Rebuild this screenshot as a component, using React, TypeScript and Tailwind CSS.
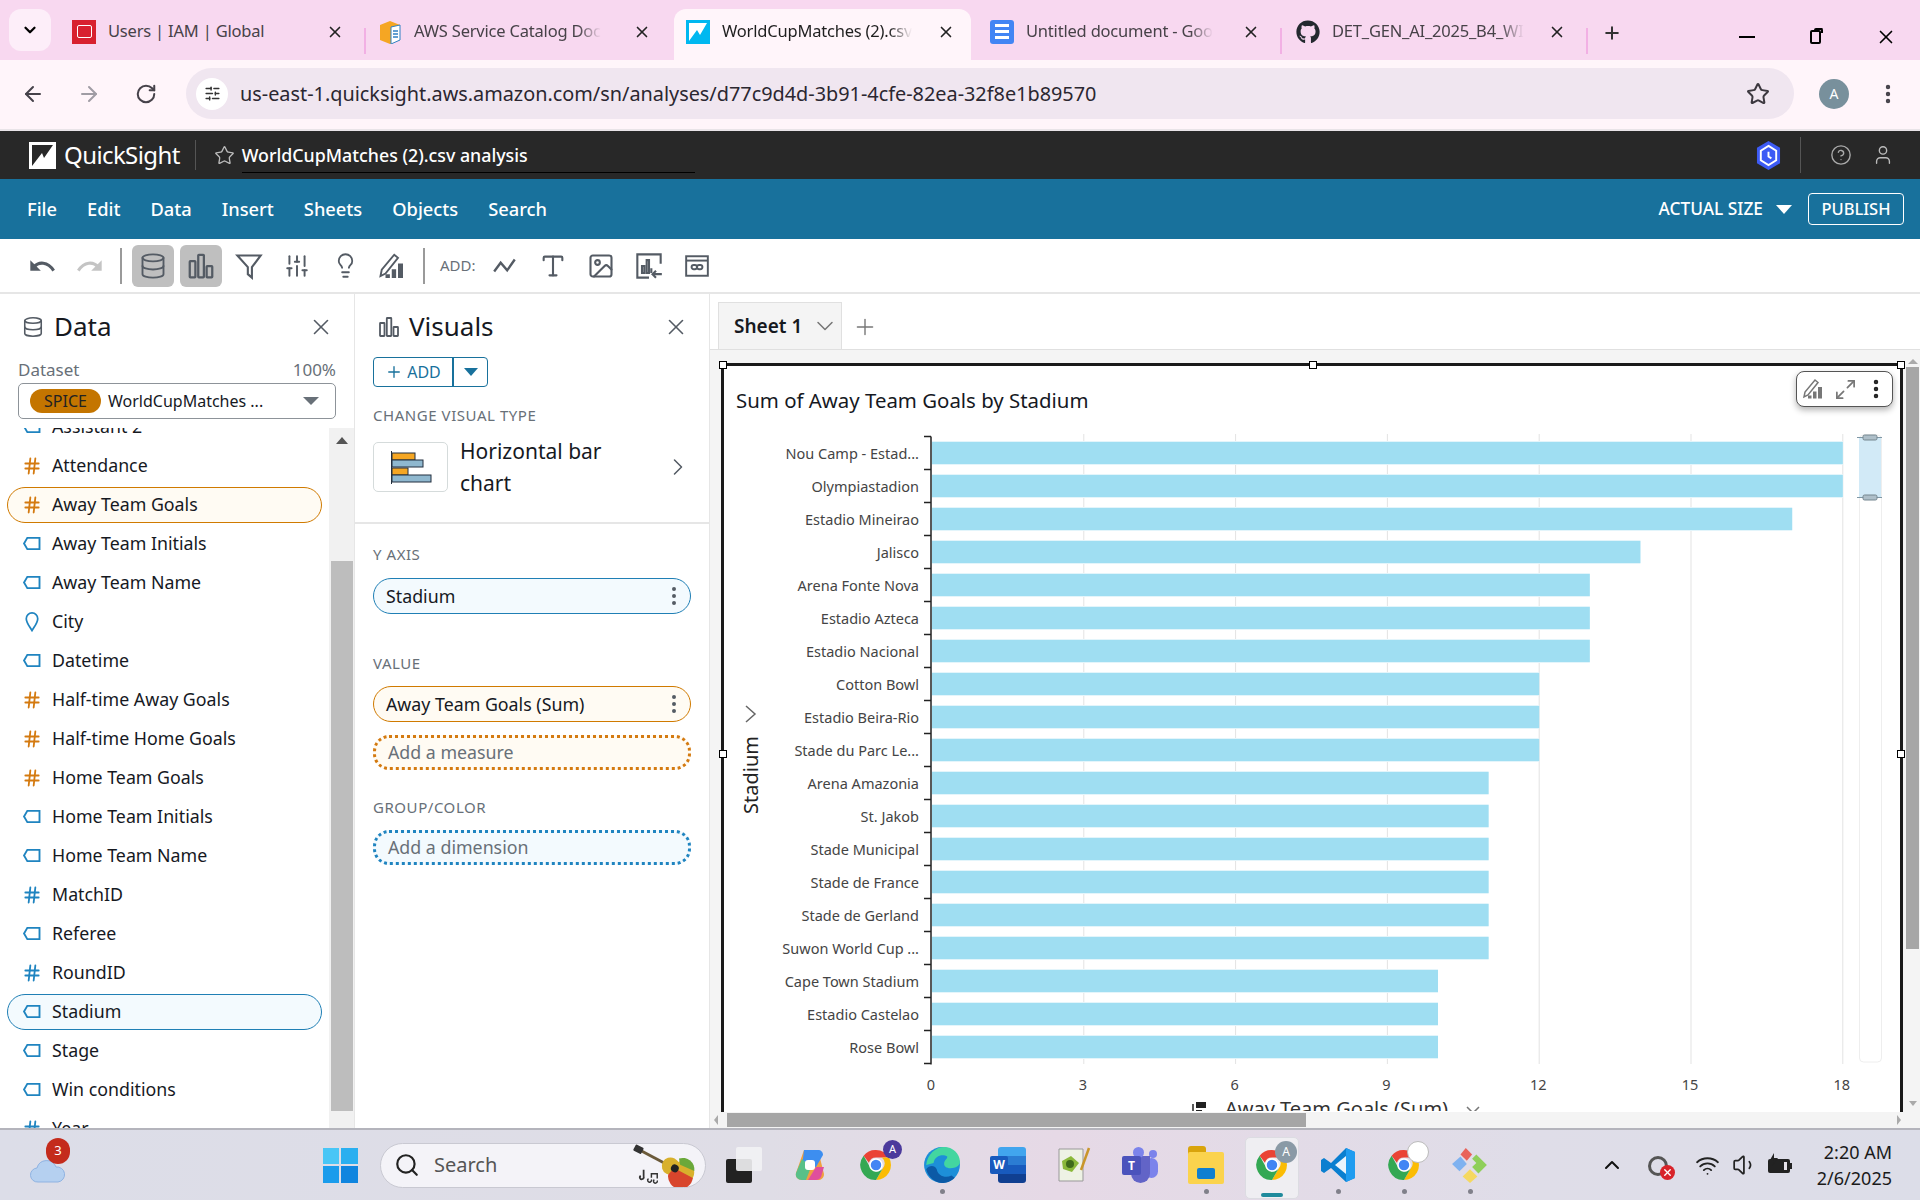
import {
  ArrowLeft,
  ArrowRight,
  ChevronDown,
  ChevronRight,
  ChevronUp,
  CircleHelp,
  Database,
  Hash,
  Image,
  Lightbulb,
  Maximize2,
  MoreVertical,
  Plus,
  RotateCw,
  Search,
  SlidersVertical,
  Star,
  Type,
  User,
  Volume1,
  Wifi,
  X,
} from "lucide-react";
import { FaGithub } from "react-icons/fa";

const font = "font-['Noto_Sans',sans-serif]";

const fields: { name: string; kind: "tag" | "dim" | "measure" | "geo" | "idnum"; active?: boolean }[] = [
  { name: "Attendance", kind: "measure" },
  { name: "Away Team Goals", kind: "measure", active: true },
  { name: "Away Team Initials", kind: "tag" },
  { name: "Away Team Name", kind: "tag" },
  { name: "City", kind: "geo" },
  { name: "Datetime", kind: "tag" },
  { name: "Half-time Away Goals", kind: "measure" },
  { name: "Half-time Home Goals", kind: "measure" },
  { name: "Home Team Goals", kind: "measure" },
  { name: "Home Team Initials", kind: "tag" },
  { name: "Home Team Name", kind: "tag" },
  { name: "MatchID", kind: "idnum" },
  { name: "Referee", kind: "tag" },
  { name: "RoundID", kind: "idnum" },
  { name: "Stadium", kind: "tag", active: true },
  { name: "Stage", kind: "tag" },
  { name: "Win conditions", kind: "tag" },
  { name: "Year", kind: "idnum" },
];

const stadiums: [string, number][] = [
  ["Nou Camp - Estad...", 18],
  ["Olympiastadion", 18],
  ["Estadio Mineirao", 17],
  ["Jalisco", 14],
  ["Arena Fonte Nova", 13],
  ["Estadio Azteca", 13],
  ["Estadio Nacional", 13],
  ["Cotton Bowl", 12],
  ["Estadio Beira-Rio", 12],
  ["Stade du Parc Le...", 12],
  ["Arena Amazonia", 11],
  ["St. Jakob", 11],
  ["Stade Municipal", 11],
  ["Stade de France", 11],
  ["Stade de Gerland", 11],
  ["Suwon World Cup ...", 11],
  ["Cape Town Stadium", 10],
  ["Estadio Castelao", 10],
  ["Rose Bowl", 10],
];

function TagIcon({ className }: { className?: string }) {
  return (
    <svg viewBox="0 0 20 16" className={className} fill="none" stroke="currentColor" strokeWidth="2">
      <path d="M5 2h13v12H5L1.5 8z" />
    </svg>
  );
}

function BarsIcon({ className }: { className?: string }) {
  return (
    <svg viewBox="0 0 24 24" className={className} fill="none" stroke="currentColor" strokeWidth="1.8">
      <rect x="3" y="8" width="4.5" height="13" rx="0.5" />
      <rect x="9.8" y="3" width="4.5" height="18" rx="0.5" />
      <rect x="16.5" y="12" width="4.5" height="9" rx="0.5" />
    </svg>
  );
}

function PencilBarsIcon({ className }: { className?: string }) {
  return (
    <svg viewBox="0 0 24 24" className={className} fill="none" stroke="currentColor" strokeWidth="1.5">
      <path d="M2 20l1-5L13 3l3 2.500L6 18z" />
      <path d="M6 21.500v-3h3.500v3zM11 21.500v-7h3.500v7zM16 21.500V10h4v11.500z" fill="currentColor" stroke="none" />
    </svg>
  );
}

function UndoIcon({ className, flip }: { className?: string; flip?: boolean }) {
  return (
    <svg viewBox="0 0 24 24" className={`${className} ${flip ? "-scale-x-100" : ""}`} fill="none" stroke="currentColor" strokeWidth="2.600">
      <path d="M5 13c4-5 12-5 17 3" />
      <path d="M2 7v9h9z" fill="currentColor" stroke="none" />
    </svg>
  );
}

function Tab({
  title,
  icon,
  active,
  width,
  fade = true,
}: {
  title: string;
  icon: React.ReactNode;
  active?: boolean;
  width: string;
  fade?: boolean;
}) {
  return (
    <div className={`${width} flex h-[51px] shrink-0 items-center pb-[6px] pl-[12px] ${active ? "rounded-t-[12px] bg-[#fff5fa] pr-[16px] text-[#1f1f1f]" : "pr-[20px] text-[#474248]"}`}>
      <div className="flex h-6 w-6 shrink-0 items-center justify-center">{icon}</div>
      <span className="ml-3 min-w-0 flex-1 whitespace-nowrap text-[16.500px] tracking-[-0.2px]">
        <span className={`inline-block ${fade ? "[mask-image:linear-gradient(to_right,black_88%,transparent)]" : ""}`}>{title}</span>
      </span>
      <X className="ml-2 h-[18px] w-[18px] shrink-0 text-[#222]" strokeWidth={2.2} />
    </div>
  );
}

function TabSep() {
  return <div className="mb-[6px] h-[26px] w-[2px] shrink-0 bg-[#f2b0e4]" />;
}

function ToolIcon({ children, selected }: { children: React.ReactNode; selected?: boolean }) {
  return (
    <div className={`flex h-[42px] w-[42px] items-center justify-center rounded-[6px] text-[#545b64] ${selected ? "bg-[#bfbfbf]" : ""}`}>
      {children}
    </div>
  );
}

function FieldIcon({ kind }: { kind: string }) {
  if (kind === "tag") return <TagIcon className="h-[15px] w-[20px] text-[#1f84c0]" />;
  if (kind === "geo") {
    return (
      <svg viewBox="0 0 20 22" className="h-[21px] w-[20px] text-[#1f84c0]" fill="none" stroke="currentColor" strokeWidth="1.8">
        <path d="M10 20.5C7 15.5 4 12 4 8a6 6 0 0 1 12 0c0 4-3 7.500-6 12.500z" />
      </svg>
    );
  }
  return <Hash className={`h-[22px] w-[20px] ${kind === "measure" ? "text-[#d47a10]" : "text-[#1f84c0]"}`} strokeWidth={2.2} />;
}

function FieldRow({ name, kind, active }: { name: string; kind: string; active?: boolean }) {
  const pill = active
    ? kind === "measure"
      ? "border-[#d07a00] bg-[#fffbf3]"
      : "border-[#1f7fb5] bg-[#f3fafe]"
    : "border-transparent";
  return (
    <div className="flex h-[39px] items-center pl-[7px]">
      <div className={`flex h-[36px] w-[315px] items-center gap-[10px] rounded-full border pl-[14px] text-[17.800px] text-[#16191f] ${pill}`}>
        <div className="flex w-[20px] justify-center">
          <FieldIcon kind={kind} />
        </div>
        <span>{name}</span>
      </div>
    </div>
  );
}

function SectionLabel({ children }: { children: React.ReactNode }) {
  return <div className="text-[15px] leading-5 tracking-[0.55px] text-[#687078]">{children}</div>;
}

function WellPill({ children, tone }: { children: React.ReactNode; tone: "blue" | "orange" }) {
  return (
    <div className={`flex h-[36px] w-[318px] items-center justify-between rounded-full border pl-[12px] pr-[4px] text-[17.800px] text-[#16191f] ${tone === "blue" ? "border-[#1f7fb5] bg-[#f3fafe]" : "border-[#d07a00] bg-[#fffbf3]"}`}>
      <span>{children}</span>
      <MoreVertical className="h-6 w-6 text-[#545b64]" />
    </div>
  );
}

function DropWell({ children, tone }: { children: React.ReactNode; tone: "blue" | "orange" }) {
  return (
    <div className={`flex h-[35px] w-[318px] items-center rounded-[16px] border-[3px] border-dotted pl-[12px] text-[17.800px] text-[#687078] ${tone === "blue" ? "border-[#1f84c0] bg-[#f3fafe]" : "border-[#d47a10] bg-[#fffbf3]"}`}>
      {children}
    </div>
  );
}

function Handle({ className }: { className: string }) {
  return <div className={`absolute h-[8px] w-[8px] border border-black bg-white ${className}`} />;
}

function Chart() {
  const x0 = 932;
  const unit = 50.6;
  return (
    <svg width="1175" height="692" className="block" fontFamily="Noto Sans, sans-serif">
      <g transform="translate(-724,-420)">
        {[3, 6, 9, 12, 15, 18].map((t) => (
          <line key={t} x1={x0 + t * unit} x2={x0 + t * unit} y1="435" y2="1065" stroke="#e3e3e3" />
        ))}
        {stadiums.map(([name, value], i) => {
          const y = 454 + i * 33;
          return (
            <g key={name}>
              <rect x={x0} y={y - 12} width={value * unit} height="24" fill="#e3f5fb" />
              <rect x={x0} y={y - 11} width={value * unit} height="22" fill="#9fdef2" />
              <text x="919" y={y + 6} textAnchor="end" fontSize="14.500" fill="#444">
                {name}
              </text>
            </g>
          );
        })}
        <path
          d={`M931 437.500V1065.500 ${stadiums.map((_, i) => `M924 ${437.5 + i * 33}H931`).join(" ")} M924 1064.500H931`}
          stroke="#222"
          strokeWidth="1.5"
          fill="none"
        />
        {[0, 3, 6, 9, 12, 15, 18].map((t) => (
          <text key={t} x={x0 + t * unit - 1} y="1091" textAnchor="middle" fontSize="14.500" fill="#444">
            {t}
          </text>
        ))}
        <path d="M1193 1105V1118" stroke="#222" strokeWidth="1.5" />
        <rect x="1196" y="1103" width="10" height="6" fill="#222" />
        <rect x="1196" y="1111" width="6" height="6" fill="#222" />
        <text x="1225" y="1117" fontSize="20" fill="#333">
          Away Team Goals (Sum)
        </text>
        <path d="M1467 1108l6 6 6-6" stroke="#777" strokeWidth="1.5" fill="none" />
        <text transform="translate(758,776) rotate(-90)" textAnchor="middle" fontSize="20" fill="#222">
          Stadium
        </text>
        <path d="M746 707l9 8-9 8" stroke="#666" strokeWidth="1.5" fill="none" />
        <rect x="1859.500" y="436" width="22" height="627" rx="4" fill="#fff" stroke="#eee" />
        <rect x="1859" y="438" width="22" height="60" fill="#d2eaf7" />
        <path d="M1857 438.500H1882M1857 498.500H1882" stroke="#7f97a5" />
        <rect x="1863" y="436" width="14" height="5" rx="1.500" fill="#aebfc9" stroke="#75868f" />
        <rect x="1863" y="496" width="14" height="5" rx="1.500" fill="#aebfc9" stroke="#75868f" />
      </g>
    </svg>
  );
}

function ChromeIcon() {
  return (
    <svg viewBox="0 0 48 48" className="h-[36px] w-[36px]">
      <path d="M24 4a20 20 0 0 1 17.300 10H24a10 10 0 0 0-9.500 7L7.500 11.500A20 20 0 0 1 24 4z" fill="#ea4335" />
      <path d="M41.300 14A20 20 0 0 1 24 44l8.700-15a10 10 0 0 0-1-15z" fill="#fbbc04" />
      <path d="M24 44A20 20 0 0 1 7.500 11.500L16 27a10 10 0 0 0 16.700 2z" fill="#34a853" />
      <circle cx="24" cy="24" r="8" fill="#4285f4" stroke="#fff" strokeWidth="2" />
    </svg>
  );
}

function TaskSlot({ children, dot }: { children: React.ReactNode; dot?: boolean }) {
  return (
    <div className="relative flex h-[72px] w-[66px] shrink-0 items-center justify-center">
      {children}
      {dot && <div className="absolute bottom-[7px] h-[5px] w-[5px] rounded-full bg-[#80808a]" />}
    </div>
  );
}

function Badge({ children, tone }: { children?: React.ReactNode; tone: string }) {
  return (
    <div className={`absolute right-[8px] top-[12px] flex h-[22px] w-[22px] items-center justify-center rounded-full text-[12px] text-white ${tone}`}>
      {children}
    </div>
  );
}

export default function App() {
  return (
    <div className={`flex h-[1200px] w-[1920px] flex-col overflow-hidden bg-white ${font}`}>
      {/* browser tabs */}
      <div className="flex h-[60px] shrink-0 items-end bg-[#f8d8f0]">
        <div className="mb-[9px] ml-[9px] mr-[9px] flex h-[42px] w-[42px] shrink-0 items-center justify-center rounded-[12px] bg-[#fdeef9]">
          <ChevronDown className="h-[18px] w-[18px] text-black" strokeWidth={3} />
        </div>
        <Tab
          width="w-[304px]"
          fade={false}
          title="Users | IAM | Global"
          icon={
            <div className="flex h-6 w-6 items-center justify-center bg-[#d8212f]">
              <div className="h-[13px] w-[15px] rounded-[2px] border border-white" />
            </div>
          }
        />
        <TabSep />
        <Tab
          width="w-[305px]"
          title="AWS Service Catalog Doc"
          icon={
            <svg viewBox="0 0 24 24" className="h-6 w-6">
              <path d="M2 5l10-4 10 4v15l-10 4-10-4z" fill="#f5a623" />
              <path d="M13 7l9-2v15l-9 4z" fill="#fff" stroke="#2f80c4" />
              <path d="M15 11h5M15 14h5M15 17h5" stroke="#2f80c4" strokeWidth="1.500" />
            </svg>
          }
        />
        <div className="w-[3px] shrink-0" />
        <Tab
          active
          width="w-[297px]"
          title="WorldCupMatches (2).csv"
          icon={
            <svg viewBox="0 0 24 24" className="h-6 w-6">
              <rect width="24" height="24" fill="#00b8f0" />
              <path d="M3 21V3h18L14 15l-3-5z" fill="#fff" />
            </svg>
          }
        />
        <div className="w-[7px] shrink-0" />
        <Tab
          width="w-[302px]"
          title="Untitled document - Goo"
          icon={
            <div className="flex h-6 w-6 flex-col items-center justify-center gap-[3px] rounded-[3px] bg-[#4285f4]">
              <div className="h-[3px] w-[14px] bg-white" />
              <div className="h-[3px] w-[14px] bg-white" />
              <div className="h-[3px] w-[14px] bg-white" />
            </div>
          }
        />
        <TabSep />
        <div className="w-[2px] shrink-0" />
        <Tab
          width="w-[302px]"
          title="DET_GEN_AI_2025_B4_WI"
          icon={<FaGithub className="h-6 w-6 text-[#24292f]" />}
        />
        <TabSep />
        <div className="mb-[6px] ml-[14px] flex h-[42px] items-center">
          <Plus className="h-[20px] w-[20px] text-[#333]" strokeWidth={2.4} />
        </div>
        <div className="mb-[12px] ml-auto flex items-center pr-[23px]">
          <div className="h-[2px] w-[16px] bg-black" />
          <div className="relative ml-[55px] h-[14px] w-[11px] rounded-[2px] border-2 border-black">
            <div className="absolute -right-[4px] -top-[4px] h-[5px] w-[9px] rounded-t-[2px] border-r-2 border-t-2 border-black" />
          </div>
          <X className="ml-[54px] h-[22px] w-[22px] text-black" strokeWidth={1.8} />
        </div>
      </div>

      {/* address bar */}
      <div className="flex h-[71px] shrink-0 items-center border-b-2 border-[#e9e4e8] bg-[#fff5fa] pb-[2px]">
        <ArrowLeft className="ml-[21px] h-6 w-6 text-[#46424a]" />
        <ArrowRight className="ml-[32px] h-6 w-6 text-[#a09ca4]" />
        <RotateCw className="ml-[34px] h-[22px] w-[22px] text-[#46424a]" strokeWidth={2.2} />
        <div className="ml-[29px] flex h-[51px] w-[1608px] items-center rounded-full bg-[#f0e6f0]">
          <div className="ml-[10px] flex h-[32px] w-[32px] items-center justify-center rounded-full bg-white">
            <SlidersVertical className="h-[17px] w-[17px] rotate-90 text-[#333]" />
          </div>
          <span className="ml-[12px] whitespace-nowrap text-[19.850px] text-[#2b2730]">
            us-east-1.quicksight.aws.amazon.com/sn/analyses/d77c9d4d-3b91-4cfe-82ea-32f8e1b89570
          </span>
          <Star className="ml-auto mr-[24px] h-[24px] w-[24px] text-[#3c383f]" strokeWidth={2} />
        </div>
        <div className="ml-[25px] flex h-[30px] w-[30px] items-center justify-center rounded-full bg-[#78909c] text-[14px] text-white">A</div>
        <MoreVertical className="ml-[27px] h-6 w-6 text-[#46424a]" strokeWidth={2.4} />
      </div>

      {/* quicksight header */}
      <div className="flex h-[48px] shrink-0 items-center bg-[#282828] text-white">
        <svg viewBox="0 0 27 27" className="ml-[29px] h-[27px] w-[27px]">
          <rect width="27" height="27" fill="#fff" />
          <path d="M3 3h21L15 16l-2-5-10 13z" fill="#282828" />
        </svg>
        <span className="ml-[8px] text-[24px] tracking-[-0.6px]">QuickSight</span>
        <div className="ml-[15px] h-[30px] w-px bg-[#555]" />
        <Star className="ml-[18px] h-[21px] w-[21px] text-[#bbb]" strokeWidth={1.5} />
        <div className="ml-[7px] h-[36px] w-[453px] border-b border-black text-[17.800px] font-medium leading-[36px]">WorldCupMatches (2).csv analysis</div>
        <svg viewBox="0 0 26 30" className="ml-auto h-[29px] w-[25px]">
          <path d="M13 0l12 7v16l-12 7-12-7V7z" fill="#3d5bf5" />
          <path d="M13 5l8 5v10l-8 5-8-5V10z" fill="none" stroke="#fff" strokeWidth="2" />
          <path d="M13 11v5l3 2" fill="none" stroke="#fff" strokeWidth="2" />
        </svg>
        <div className="ml-[19px] h-[36px] w-px bg-[#555]" />
        <CircleHelp className="ml-[29px] h-[22px] w-[22px] text-[#aaa]" strokeWidth={1.5} />
        <User className="ml-[20px] mr-[26px] h-[22px] w-[22px] text-[#bbb]" strokeWidth={1.5} />
      </div>

      {/* menu */}
      <div className="flex h-[60px] shrink-0 items-center bg-[#18719c] text-[18.300px] font-medium text-white">
        <div className="ml-[27px] flex gap-[30px]">
          {["File", "Edit", "Data", "Insert", "Sheets", "Objects", "Search"].map((m) => (
            <span key={m}>{m}</span>
          ))}
        </div>
        <span className="ml-auto text-[17.300px]">ACTUAL SIZE</span>
        <div className="ml-[13px] h-0 w-0 border-x-[8px] border-t-[9px] border-x-transparent border-t-white" />
        <div className="ml-[16px] mr-[16px] flex h-[32px] w-[96px] items-center justify-center rounded-[4px] border border-white text-[16.500px]">PUBLISH</div>
      </div>

      {/* toolbar */}
      <div className="flex h-[55px] shrink-0 items-center border-b-2 border-[#e6e6e6] pl-[21px]">
        <ToolIcon>
          <UndoIcon className="h-[28px] w-[28px]" />
        </ToolIcon>
        <div className="ml-[6px]">
          <ToolIcon>
            <UndoIcon flip className="h-[28px] w-[28px] text-[#c4c4c4]" />
          </ToolIcon>
        </div>
        <div className="ml-[9px] mr-[10px] h-[36px] w-[2px] bg-[#9a9a9a]" />
        <ToolIcon selected>
          <Database className="h-[28px] w-[28px]" strokeWidth={1.6} />
        </ToolIcon>
        <div className="ml-[6px]">
          <ToolIcon selected>
            <BarsIcon className="h-[30px] w-[30px]" />
          </ToolIcon>
        </div>
        <div className="ml-[6px] flex gap-[6px]">
          <ToolIcon>
            <svg viewBox="0 0 24 24" className="h-[28px] w-[28px]" fill="none" stroke="currentColor" strokeWidth="1.8">
              <path d="M2 3h20l-7.500 10v9L11 19v-6z" />
            </svg>
          </ToolIcon>
          <ToolIcon>
            <SlidersVertical className="h-[26px] w-[26px]" strokeWidth={1.8} />
          </ToolIcon>
          <ToolIcon>
            <Lightbulb className="h-[27px] w-[27px]" strokeWidth={1.6} />
          </ToolIcon>
          <ToolIcon>
            <PencilBarsIcon className="h-[30px] w-[30px]" />
          </ToolIcon>
        </div>
        <div className="ml-[9px] mr-[15px] h-[36px] w-[2px] bg-[#9a9a9a]" />
        <span className="text-[15px] text-[#687078]">ADD:</span>
        <div className="ml-[8px] flex gap-[6px] text-[#545b64]">
          <ToolIcon>
            <svg viewBox="0 0 24 24" className="h-[26px] w-[26px]" fill="none" stroke="currentColor" strokeWidth="2.2">
              <path d="M2 17l6-8 6 7 7-10" />
            </svg>
          </ToolIcon>
          <ToolIcon>
            <Type className="h-[28px] w-[28px]" strokeWidth={1.8} />
          </ToolIcon>
          <ToolIcon>
            <Image className="h-[28px] w-[28px]" strokeWidth={1.8} />
          </ToolIcon>
          <ToolIcon>
            <svg viewBox="0 0 24 24" className="h-[28px] w-[28px]" fill="none" stroke="currentColor" strokeWidth="1.8">
              <path d="M22 10V2H2v20h10" />
              <path d="M6 18v-6h2v6zM10 18V7h2v11zM14 18v-4" />
              <path d="M23 19h-8m3-3l-3 3 3 3" />
            </svg>
          </ToolIcon>
          <ToolIcon>
            <svg viewBox="0 0 24 24" className="h-[26px] w-[26px]" fill="none" stroke="currentColor" strokeWidth="1.8">
              <rect x="2" y="3" width="20" height="18" />
              <path d="M2 7h20" />
              <rect x="7" y="11" width="5" height="4" rx="2" />
              <rect x="12" y="11" width="5" height="4" rx="2" />
            </svg>
          </ToolIcon>
        </div>
      </div>

      {/* main area */}
      <div className="flex min-h-0 flex-1">
        {/* data panel */}
        <div className="flex w-[355px] shrink-0 flex-col border-r border-[#e6e6e6]">
          <div className="flex h-[64px] shrink-0 items-center pl-[22px] pr-[20px] pt-[1px]">
            <Database className="h-[22px] w-[22px] text-[#545b64]" strokeWidth={1.7} />
            <span className="ml-[10px] text-[26px] text-[#16191f]">Data</span>
            <X className="ml-auto h-[26px] w-[26px] text-[#545b64]" strokeWidth={1.5} />
          </div>
          <div className="flex h-[23px] shrink-0 items-center justify-between pl-[18px] pr-[18px] text-[17px] text-[#687078]">
            <span>Dataset</span>
            <span>100%</span>
          </div>
          <div className="ml-[18px] mt-[2px] flex h-[36px] w-[318px] shrink-0 items-center rounded-[5px] border border-[#8d9399] pl-[11px] pr-[16px]">
            <span className="flex h-[24px] w-[71px] items-center justify-center rounded-full bg-[#c47500] text-[16px] text-[#222]">SPICE</span>
            <span className="ml-[7px] text-[16px] text-[#16191f]">WorldCupMatches ...</span>
            <div className="ml-auto h-0 w-0 border-x-[8px] border-t-[8px] border-x-transparent border-t-[#687078]" />
          </div>
          <div className="mt-[9px] flex min-h-0 flex-1">
            <div className="min-w-0 flex-1 overflow-hidden">
              <div className="-mt-[21px] flex h-[39px] items-center pl-[7px]">
                <div className="flex items-center gap-[10px] pl-[15px] text-[17.800px] text-[#16191f]">
                  <div className="flex w-[20px] justify-center">
                    <FieldIcon kind="tag" />
                  </div>
                  <span>Assistant 2</span>
                </div>
              </div>
              {fields.map((f) => (
                <FieldRow key={f.name} name={f.name} kind={f.kind} active={f.active} />
              ))}
            </div>
            <div className="flex w-[25px] shrink-0 flex-col items-center bg-[#f1f1f1]">
              <div className="mt-[9px] h-0 w-0 border-x-[6px] border-b-[7px] border-x-transparent border-b-[#555]" />
              <div className="mt-[117px] h-[550px] w-[22px] bg-[#bdbdbd]" />
            </div>
          </div>
        </div>

        {/* visuals panel */}
        <div className="flex w-[355px] shrink-0 flex-col border-r border-[#e6e6e6]">
          <div className="flex h-[61px] shrink-0 items-center pl-[22px] pr-[20px] pt-[4px]">
            <BarsIcon className="h-[24px] w-[24px] text-[#545b64]" />
            <span className="ml-[8px] text-[26px] text-[#16191f]">Visuals</span>
            <X className="ml-auto h-[26px] w-[26px] text-[#545b64]" strokeWidth={1.5} />
          </div>
          <div className="ml-[18px] mt-[2px] flex h-[30px] w-[115px] shrink-0 items-center rounded-[4px] border border-[#18719c] text-[#18719c]">
            <div className="flex w-[80px] items-center justify-center gap-[4px] border-r-2 border-[#18719c] text-[16px] leading-[28px]">
              <Plus className="h-[18px] w-[18px]" strokeWidth={1.8} />
              ADD
            </div>
            <div className="mx-auto h-0 w-0 border-x-[7px] border-t-[8px] border-x-transparent border-t-[#18719c]" />
          </div>
          <div className="ml-[18px] mt-[18px] shrink-0">
            <SectionLabel>CHANGE VISUAL TYPE</SectionLabel>
          </div>
          <div className="ml-[18px] mt-[17px] flex h-[50px] shrink-0 items-center pr-[17px]">
            <div className="flex h-[50px] w-[75px] items-center justify-center rounded-[5px] border border-[#d5dbdb]">
              <svg viewBox="0 0 42 34" className="h-[36px] w-[42px]">
                <rect x="2" y="3" width="23" height="7" fill="#f5a623" stroke="#232f3e" />
                <rect x="2" y="10" width="31" height="7" fill="#8fb8cf" stroke="#232f3e" />
                <rect x="2" y="18" width="16" height="7" fill="#f5a623" stroke="#232f3e" />
                <rect x="2" y="25" width="39" height="7" fill="#8fb8cf" stroke="#232f3e" />
                <path d="M1.500 1v33" stroke="#232f3e" />
              </svg>
            </div>
            <div className="ml-[12px] w-[170px] text-[21px] leading-[32px] text-[#16191f]">Horizontal bar chart</div>
            <ChevronRight className="ml-auto h-[28px] w-[28px] text-[#545b64]" strokeWidth={1.3} />
          </div>
          <div className="mt-[30px] h-[2px] shrink-0 bg-[#e6e6e6]" />
          <div className="flex flex-col pl-[18px] pt-[20px]">
            <SectionLabel>Y AXIS</SectionLabel>
            <div className="mt-[14px]">
              <WellPill tone="blue">Stadium</WellPill>
            </div>
            <div className="mt-[39px]">
              <SectionLabel>VALUE</SectionLabel>
            </div>
            <div className="mt-[13px]">
              <WellPill tone="orange">Away Team Goals (Sum)</WellPill>
            </div>
            <div className="mt-[13px]">
              <DropWell tone="orange">Add a measure</DropWell>
            </div>
            <div className="mt-[27px]">
              <SectionLabel>GROUP/COLOR</SectionLabel>
            </div>
            <div className="mt-[13px]">
              <DropWell tone="blue">Add a dimension</DropWell>
            </div>
          </div>
        </div>

        {/* sheet */}
        <div className="flex min-w-0 flex-1 flex-col">
          <div className="flex h-[56px] shrink-0 items-end border-b border-[#e0e0e0] pl-[8px]">
            <div className="flex h-[47px] w-[124px] items-center border border-b-0 border-[#e0e0e0] bg-[#f4f4f4] pl-[15px]">
              <span className="text-[19px] font-semibold text-[#16191f]">Sheet 1</span>
              <ChevronDown className="ml-[9px] h-[28px] w-[28px] text-[#777]" strokeWidth={1.3} />
            </div>
            <div className="mb-[9px] ml-[10px]">
              <Plus className="h-[26px] w-[26px] text-[#777]" strokeWidth={1.3} />
            </div>
          </div>
          <div className="flex min-h-0 flex-1 bg-[#f4f4f4]">
            <div className="min-w-0 flex-1 overflow-hidden pl-[11px] pt-[13px]">
              <div className="relative h-[900px] w-[1182px] border-[3px] border-b-0 border-[#1a1a1a] bg-white">
                <Handle className="-left-[5px] -top-[5px]" />
                <Handle className="left-[585px] -top-[5px]" />
                <Handle className="-right-[5px] -top-[5px]" />
                <Handle className="-left-[5px] top-[384px]" />
                <Handle className="-right-[5px] top-[384px]" />
                <div className="flex h-[53px] items-end pb-[3px] pl-[12px] text-[20.400px] text-[#16191f]">Sum of Away Team Goals by Stadium</div>
                <Chart />
                <div className="absolute right-[7px] top-[5px] flex h-[36px] w-[97px] items-center justify-between rounded-[8px] border border-[#555] bg-white pl-[5px] pr-[4px] text-[#777] shadow-[0_3px_6px_rgba(0,0,0,0.3)]">
                  <PencilBarsIcon className="h-[24px] w-[24px]" />
                  <Maximize2 className="h-[23px] w-[23px]" strokeWidth={1.8} />
                  <MoreVertical className="h-[24px] w-[24px] text-[#222]" strokeWidth={2.5} />
                </div>
              </div>
            </div>
            <div className="flex w-[15px] shrink-0 flex-col items-center">
              <div className="mt-[9px] h-0 w-0 border-x-[5px] border-b-[5px] border-x-transparent border-b-[#aaa]" />
              <div className="mt-[3px] h-[582px] w-[13px] bg-[#a6a6a6]" />
              <div className="mb-[6px] mt-auto h-0 w-0 border-x-[4px] border-t-[5px] border-x-transparent border-t-[#aaa]" />
            </div>
          </div>
          <div className="flex h-[16px] shrink-0 items-center bg-[#f4f4f4] pl-[4px]">
            <div className="h-0 w-0 border-y-[5px] border-r-[4px] border-y-transparent border-r-[#aaa]" />
            <div className="ml-[9px] h-[14px] w-[579px] bg-[#a6a6a6]" />
            <div className="ml-auto mr-[19px] h-0 w-0 border-y-[5px] border-l-[4px] border-y-transparent border-l-[#aaa]" />
          </div>
        </div>
      </div>

      {/* windows taskbar */}
      <div className="flex h-[72px] shrink-0 items-center border-t-2 border-[#b4b4bc] bg-[linear-gradient(90deg,#dcdde8_0%,#dfdde6_40%,#e6d9e6_55%,#dfdde8_80%,#dcdde8_100%)]">
        <div className="relative flex h-[70px] w-[307px] shrink-0 items-center pl-[30px]">
          <svg viewBox="0 0 36 24" className="mt-[12px] h-[24px] w-[36px]">
            <path d="M8 23a7 7 0 0 1-1-14 10 10 0 0 1 19-1 7.500 7.500 0 0 1 2 15z" fill="#b5d0f0" stroke="#8fb3e2" />
          </svg>
          <div className="absolute left-[46px] top-[8px] flex h-[26px] w-[24px] items-center justify-center rounded-full bg-[#c42b1c] text-[13px] text-white">3</div>
        </div>
        <TaskSlot>
          <div className="grid h-[35px] w-[35px] grid-cols-2 gap-[2px]">
            <div className="bg-[#48c6f6]" />
            <div className="bg-[#2aaff0]" />
            <div className="bg-[#1a9cec]" />
            <div className="bg-[#0f85df]" />
          </div>
        </TaskSlot>
        <div className="ml-[7px] flex h-[45px] w-[326px] shrink-0 items-center rounded-full border border-[#c9c9d2] bg-[#f4f3f8] pl-[13px]">
          <Search className="h-[26px] w-[26px] text-[#222]" strokeWidth={2} />
          <span className="ml-[14px] text-[20px] text-[#555]">Search</span>
          <svg viewBox="0 0 70 44" className="ml-auto mr-[6px] h-[44px] w-[68px]">
            <path d="M8 6l30 16" stroke="#6b5a3a" strokeWidth="3" />
            <rect x="3" y="2" width="9" height="7" rx="1" fill="#333" transform="rotate(28 7 6)" />
            <g transform="rotate(28 46 26)">
              <ellipse cx="40" cy="26" rx="9" ry="9" fill="#d8b02c" />
              <ellipse cx="54" cy="26" rx="12" ry="12" fill="#d8b02c" />
              <path d="M42 35a12 12 0 0 0 24-9H44z" fill="#d8452c" />
              <path d="M44 15a12 12 0 0 1 20 4l-16 1z" fill="#6aa83a" />
              <circle cx="45" cy="26" r="4" fill="#222" />
            </g>
            <path d="M13 27v7M13 34a2 2 0 1 1-3-1" stroke="#333" strokeWidth="1.800" fill="none" />
            <path d="M21 35v-4h6v5M21 37a2 2 0 1 1-3-1M27 38a2 2 0 1 1-3-1" stroke="#333" strokeWidth="1.500" fill="none" />
          </svg>
        </div>
        <div className="ml-[5px] flex shrink-0">
          <TaskSlot>
            <div className="relative h-[36px] w-[36px]">
              <div className="absolute bottom-0 left-0 h-[24px] w-[26px] rounded-[2px] bg-[#222]" />
              <div className="absolute right-0 top-0 h-[24px] w-[26px] rounded-[2px] bg-[#f2f2f4]/90" />
            </div>
          </TaskSlot>
          <TaskSlot>
            <svg viewBox="0 0 36 36" className="h-[36px] w-[36px]">
              <path d="M12 3h14l6 24c0 4-3 6-6 6H10C6 33 3 30 4 26z" fill="#f0a040" />
              <path d="M12 3h14c3 0 5 2 5 5l-7 12H10z" fill="#3d8ef0" />
              <path d="M4 26l6-14 9 8-5 13h-4c-4 0-7-3-6-7z" fill="#58c088" />
              <path d="M24 20h8l-3 10c-1 2-3 3-5 3h-8z" fill="#e04f9c" />
              <rect x="13" y="13" width="10" height="10" rx="3" fill="#fff" />
            </svg>
          </TaskSlot>
          <TaskSlot>
            <ChromeIcon />
            <div className="absolute right-[7px] top-[11px] flex h-[19px] w-[19px] items-center justify-center rounded-full bg-[#4b3a9c] text-[11px] text-white">A</div>
          </TaskSlot>
          <TaskSlot dot>
            <svg viewBox="0 0 36 36" className="h-[38px] w-[38px]">
              <circle cx="18" cy="18" r="17" fill="#1d8fd8" />
              <path d="M3 18C4 8 12 1 20 1c8 0 15 6 15 14 0 4-4 6-9 6-4 0-6-2-6-4 0-4 3-4 3-7-4-3-12-1-13 6z" fill="#43d6a0" />
              <path d="M13 22c1 6 8 9 14 6l3 2c-4 4-8 5-12 5-6 0-13-5-15-13 3-4 8-4 10 0z" fill="#0c5aa6" />
            </svg>
          </TaskSlot>
          <TaskSlot>
            <div className="relative h-[36px] w-[36px]">
              <div className="absolute right-0 top-0 flex h-[36px] w-[28px] flex-col overflow-hidden rounded-[3px]">
                <div className="flex-1 bg-[#41a5ee]" />
                <div className="flex-1 bg-[#2b7cd3]" />
                <div className="flex-1 bg-[#185abd]" />
                <div className="flex-1 bg-[#103f91]" />
              </div>
              <div className="absolute left-0 top-[9px] flex h-[18px] w-[18px] items-center justify-center rounded-[2px] bg-[#185abd] text-[12px] font-bold text-white">W</div>
            </div>
          </TaskSlot>
          <TaskSlot>
            <svg viewBox="0 0 36 38" className="h-[38px] w-[36px]">
              <path d="M3 3h24v32H3z" fill="#eef2e4" stroke="#999" />
              <path d="M6 15l9-5 8 7-7 9-9-3z" fill="#8ab83a" />
              <circle cx="14" cy="18" r="4" fill="#3f6b1a" />
              <path d="M25 24L33 2" stroke="#c9962a" strokeWidth="2.500" />
            </svg>
          </TaskSlot>
          <TaskSlot>
            <div className="relative h-[36px] w-[36px]">
              <div className="absolute right-0 top-[11px] h-[20px] w-[13px] rounded-full bg-[#7b83eb]" />
              <div className="absolute right-[1px] top-[3px] h-[8px] w-[8px] rounded-full bg-[#7b83eb]" />
              <div className="absolute left-[9px] top-[9px] h-[27px] w-[19px] rounded-b-full bg-[#6264c7]" />
              <div className="absolute left-[11px] top-0 h-[11px] w-[11px] rounded-full bg-[#7b83eb]" />
              <div className="absolute left-0 top-[9px] flex h-[19px] w-[19px] items-center justify-center rounded-[2px] bg-[#4b53bc] text-[12px] font-bold text-white">T</div>
            </div>
          </TaskSlot>
          <TaskSlot dot>
            <div className="relative h-[38px] w-[36px]">
              <div className="absolute left-0 top-0 h-[10px] w-[18px] rounded-t-[3px] bg-[#d9a40c]" />
              <div className="absolute bottom-0 left-0 h-[32px] w-[36px] rounded-[2px] bg-[#fbd34d]" />
              <div className="absolute bottom-[5px] left-[9px] h-[11px] w-[18px] rounded-[2px] bg-[#0f7fd0]" />
            </div>
          </TaskSlot>
          <TaskSlot>
            <div className="absolute bottom-[2px] top-[8px] left-[6px] right-[6px] rounded-[5px] border border-[#dcdce2] bg-[#efeef2]" />
            <div className="relative">
              <ChromeIcon />
            </div>
            <Badge tone="bg-[#8a9aa6]">A</Badge>
            <div className="absolute bottom-[4px] h-[4px] w-[22px] rounded-full bg-[#1f8a9c]" />
          </TaskSlot>
          <TaskSlot dot>
            <svg viewBox="0 0 36 36" className="h-[36px] w-[36px]">
              <path d="M26 1l9 4v26l-9 4-15-14-7 5-3-2V13l3-2 7 5z" fill="#0a7fd0" />
              <path d="M26 1l9 4v26l-9 4z" fill="#1f9cf0" />
              <path d="M26 9L15 18l11 9z" fill="#eaf4fc" />
            </svg>
          </TaskSlot>
          <TaskSlot dot>
            <ChromeIcon />
            <Badge tone="bg-white border border-[#bbb]" />
          </TaskSlot>
          <TaskSlot dot>
            <svg viewBox="0 0 36 36" className="h-[38px] w-[38px]">
              <path d="M14 2l6 6-5 6-6-6z" fill="#e8635a" />
              <path d="M9 10l6 7-7 7-7-7z" fill="#7fb2f0" />
              <path d="M24 8l10 10-8 8-6-6 4-4-4-4z" fill="#8fcf5a" />
              <path d="M18 22l7 7-7 6-7-6z" fill="#f5d860" />
            </svg>
          </TaskSlot>
        </div>
        <div className="ml-auto flex items-center pr-[28px]">
          <ChevronUp className="h-[24px] w-[24px] text-[#111]" strokeWidth={2} />
          <div className="relative ml-[24px] h-[24px] w-[24px]">
            <div className="absolute left-0 top-[3px] h-[20px] w-[20px] rounded-full border-[3px] border-[#555]" />
            <div className="absolute bottom-[-3px] right-[-3px] flex h-[15px] w-[15px] items-center justify-center rounded-full bg-[#d8232a]">
              <X className="h-[11px] w-[11px] text-white" strokeWidth={3} />
            </div>
          </div>
          <Wifi className="ml-[23px] h-[25px] w-[25px] text-[#222]" strokeWidth={1.8} />
          <Volume1 className="ml-[12px] h-[26px] w-[26px] text-[#222]" strokeWidth={1.6} />
          <svg viewBox="0 0 26 26" className="ml-[9px] h-[26px] w-[26px]">
            <rect x="1" y="7" width="22" height="14" rx="2" fill="#222" />
            <rect x="4" y="10" width="16" height="8" fill="#e6e2ea" />
            <rect x="4" y="10" width="13" height="8" fill="#222" />
            <rect x="23" y="11" width="2" height="6" fill="#222" />
            <path d="M7 1L3 8h4l-2 6 6-8H7z" fill="#222" />
          </svg>
          <div className="ml-[24px] text-right text-[18px] leading-[26px] text-[#1a1a1a]">
            <div>2:20 AM</div>
            <div>2/6/2025</div>
          </div>
        </div>
      </div>
    </div>
  );
}
